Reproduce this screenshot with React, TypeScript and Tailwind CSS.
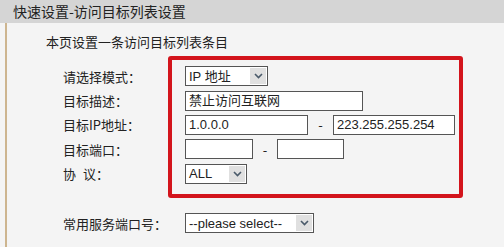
import React from "react";

const font = { fontFamily: '"Noto Sans CJK SC", "Liberation Sans", sans-serif' };

function Select({ value, width }: { value: string; width: string }) {
  return (
    <div className={`flex h-[20px] ${width} items-stretch border border-[#555] bg-white`}>
      <div className="flex flex-1 items-center pl-[3px] text-[13px] leading-none text-[#222]" style={{ fontFamily: '"Liberation Sans", "Noto Sans CJK SC", sans-serif' }}>
        {value}
      </div>
      <div className="m-[1px] flex w-[16px] items-center justify-center bg-[#e0e0e0]">
        <svg width="9" height="6" viewBox="0 0 9 6">
          <path d="M1 1 L4.5 4.5 L8 1" fill="none" stroke="#4a5a6a" strokeWidth="1.6" />
        </svg>
      </div>
    </div>
  );
}

function Input({ value, width }: { value?: string; width: string }) {
  return (
    <div
      className={`flex h-[20px] ${width} items-center border border-[#555] bg-white pl-[3px] text-[13px] leading-none text-[#222]`}
      style={{ fontFamily: '"Liberation Sans", "Noto Sans CJK SC", sans-serif' }}
    >
      {value}
    </div>
  );
}

function Row({ label, children }: { label: React.ReactNode; children: React.ReactNode }) {
  return (
    <div className="flex h-[24.4px] items-center">
      <div className="w-[122px] text-[13px] leading-none text-[#222]">{label}</div>
      <div className="flex items-center">{children}</div>
    </div>
  );
}

export default function App() {
  return (
    <div className="h-[247px] w-[504px] overflow-hidden bg-[#f4f4f4]" style={font}>
      <div className="flex h-[23px] items-center bg-[#d5d5d5] pl-[13px] text-[14px] text-[#222]">
        快速设置-访问目标列表设置
      </div>
      <div className="ml-[5px] h-[224px] border-l-2 border-[#cdb58f] pl-[56px]">
        <div className="relative">
          <div className="-ml-[17px] pt-[10px] text-[13px] leading-[18px] text-[#222]">
            本页设置一条访问目标列表条目
          </div>
          <div className="mt-[13px]">
            <Row label="请选择模式：">
              <Select value="IP 地址" width="w-[83px]" />
            </Row>
            <Row label="目标描述：">
              <Input value="禁止访问互联网" width="w-[178px]" />
            </Row>
            <Row label="目标IP地址：">
              <Input value="1.0.0.0" width="w-[123px]" />
              <span className="w-[25px] text-center text-[13px] text-[#222]">-</span>
              <Input value="223.255.255.254" width="w-[122px]" />
            </Row>
            <Row label="目标端口：">
              <Input width="w-[68px]" />
              <span className="w-[24px] text-center text-[13px] text-[#222]">-</span>
              <Input width="w-[67px]" />
            </Row>
            <Row label={<><span className="mr-[7px]">协</span>议：</>}>
              <Select value="ALL" width="w-[62px]" />
            </Row>
          </div>
          <div className="mt-[25px]">
            <Row label="常用服务端口号：">
              <Select value="--please select--" width="w-[129px]" />
            </Row>
          </div>
          <div className="pointer-events-none absolute left-[105px] top-[33px] h-[142px] w-[295px] rounded-[3px] border-[4px] border-[#d3141c]" />
        </div>
      </div>
    </div>
  );
}
